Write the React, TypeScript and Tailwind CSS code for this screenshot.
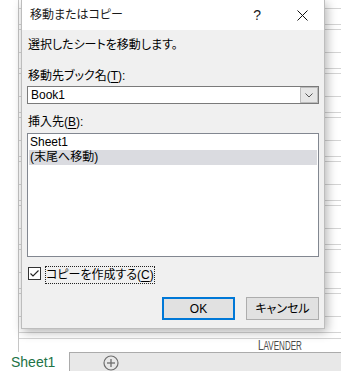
import React from "react";

const lines = [8, 24, 29, 52, 68, 73, 96, 112, 117, 140, 156, 161, 184, 200, 205, 228, 244, 249, 272, 288, 293, 316, 332, 338];

export default function App() {
  const rows: number[] = [];
  let prev = -1;
  for (const l of lines) {
    rows.push(l - prev);
    prev = l;
  }
  return (
    <div
      className="relative w-[341px] h-[371px] overflow-hidden bg-white text-black [font-feature-settings:'palt']"
      style={{ fontFamily: '"Liberation Sans", "Noto Sans CJK JP", sans-serif' }}
    >
      {/* spreadsheet background */}
      <div className="flex h-[352px]">
        <div className="w-[18px] shrink-0" />
        <div className="flex-1 flex flex-col border-l border-[#c6c6c6]">
          {rows.map((h, i) => (
            <div key={i} className="border-b border-[#d4d4d4] shrink-0" style={{ height: h }} />
          ))}
          <div className="h-[13px] shrink-0 flex items-end pl-[239px] text-[#4a4a4a] whitespace-nowrap">
            <span className="inline-block origin-left scale-x-[0.67] leading-[12px]">
              <span className="text-[15px]">L</span>
              <span className="text-[12px]">AVENDER</span>
            </span>
          </div>
        </div>
      </div>
      {/* tab bar */}
      <div className="flex h-[19px]">
        <div className="w-[69px] shrink-0 bg-white pl-[11px] pt-[2px] text-[14px] leading-[17px] text-[#217346]">
          Sheet1
        </div>
        <div className="flex-1 bg-[#e8e8e8] border-t border-l border-[#ababab]">
          <svg width="16" height="16" viewBox="0 0 16 16" className="ml-[33px] mt-[2px]">
            <circle cx="8" cy="8" r="7" fill="none" stroke="#6d6d6d" strokeWidth="1.2" />
            <line x1="4" y1="8" x2="12" y2="8" stroke="#6d6d6d" strokeWidth="1.3" />
            <line x1="8" y1="4" x2="8" y2="12" stroke="#6d6d6d" strokeWidth="1.3" />
          </svg>
        </div>
      </div>

      {/* dialog */}
      <div className="absolute left-[21px] top-0 w-[304px] h-[329px] flex flex-col border-x border-b border-[#bdbdbd] shadow-[2px_3px_10px_rgba(0,0,0,0.3)]">
        <div className="h-[30px] shrink-0 bg-white flex items-center pl-[8px] pr-[16px]">
          <span className="text-[12px] leading-[16px] text-[#1a1a1a]">移動またはコピー</span>
          <span className="ml-auto text-[14px] leading-[16px] text-[#1a1a1a]">?</span>
          <svg width="11" height="11" viewBox="0 0 11 11" className="ml-[36px]">
            <line x1="0.5" y1="0.5" x2="10.5" y2="10.5" stroke="#111" strokeWidth="1" />
            <line x1="10.5" y1="0.5" x2="0.5" y2="10.5" stroke="#111" strokeWidth="1" />
          </svg>
        </div>
        <div className="flex-1 bg-[#f0f0f0] px-[5px] pt-[7px] flex flex-col text-[12px] leading-[16px]">
          <div className="pl-[1px]">選択したシートを移動します。</div>
          <div className="pl-[1px] mt-[15px]">
            移動先ブック名(<span className="underline underline-offset-2">T</span>):
          </div>
          <div className="mt-[2px] h-[18px] flex border border-[#7a7a7a] bg-white">
            <div className="flex-1 pl-[3px] leading-[16px]">Book1</div>
            <div className="w-[18px] h-full bg-[#e6e6e6] border border-[#bcbcbc] flex items-center justify-center">
              <svg width="8" height="5" viewBox="0 0 8 5">
                <polyline points="0.5,0.5 4,4 7.5,0.5" fill="none" stroke="#555" strokeWidth="1" />
              </svg>
            </div>
          </div>
          <div className="pl-[1px] mt-[10px]">
            挿入先(<span className="underline underline-offset-2">B</span>):
          </div>
          <div className="mt-[3px] h-[124px] border border-[#828790] bg-white p-[1px]">
            <div className="h-[15px] leading-[15px] pl-[1px]">Sheet1</div>
            <div className="h-[15px] leading-[15px] pl-[1px] bg-[#dadbe0]">(末尾へ移動)</div>
          </div>
          <div className="mt-[9px] h-[18px] flex items-start pl-[1px]">
            <div className="mt-[1px] w-[13px] h-[13px] border border-[#333] bg-white flex items-center justify-center">
              <svg width="11" height="11" viewBox="0 0 11 11">
                <polyline points="1.5,5.5 4,8 9.5,2.5" fill="none" stroke="#222" strokeWidth="1.1" />
              </svg>
            </div>
            <div className="ml-[4px] h-[18px] border border-dotted border-[#222] leading-[16px]">
              コピーを作成する(<span className="underline underline-offset-2">C</span>)
            </div>
          </div>
          <div className="mt-[13px] flex justify-end gap-[11px]">
            <div className="w-[73px] h-[23px] border-2 border-[#0078d7] bg-[#e1e1e1] flex items-center justify-center">
              OK
            </div>
            <div className="w-[73px] h-[23px] border border-[#adadad] bg-[#e1e1e1] flex items-center justify-center">
              キャンセル
            </div>
          </div>
        </div>
      </div>
    </div>
  );
}
